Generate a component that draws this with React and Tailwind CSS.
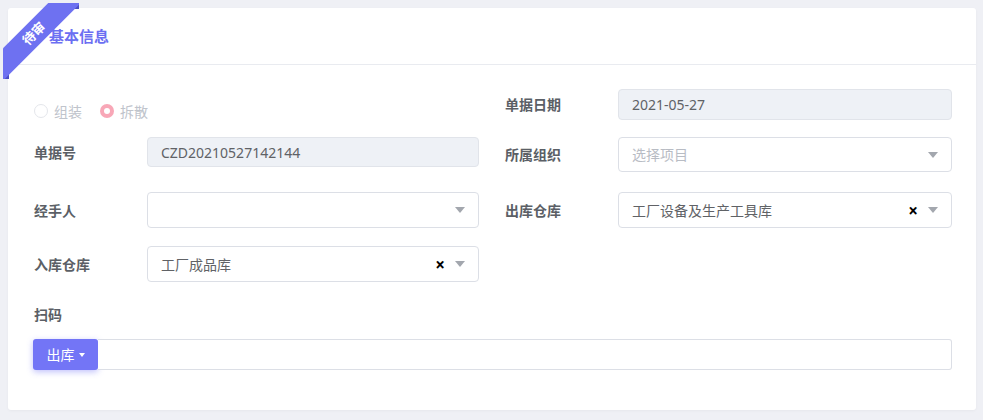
import React from "react";

const Caret = () => (
  <span className="ml-[10px] inline-block h-0 w-0 border-x-[5px] border-t-[6px] border-x-transparent border-t-[#a3a7ae]" />
);

const Select = ({ value, placeholder, clearable, h = "h-[36px]" }) => (
  <div className={`flex ${h} w-full items-center rounded-[4px] border border-[#dcdfe6] bg-white pl-[13px] pr-[13px]`}>
    <span className={`flex-1 truncate text-[14px] ${value ? "text-[#606266]" : "text-[#b8bcc4]"}`}>
      {value || placeholder}
    </span>
    {clearable && <span className="text-[17px] font-bold leading-none text-black">×</span>}
    <Caret />
  </div>
);

const Disabled = ({ value, h = "h-[31px]" }) => (
  <div className={`flex ${h} w-full items-center rounded-[4px] border border-[#e1e4ea] bg-[#eef1f6] px-[13px] text-[14px] text-[#606266]`}>
    {value}
  </div>
);

const Field = ({ label, children, className = "" }) => (
  <div className={`flex items-center ${className}`}>
    <div className="w-[113px] shrink-0 text-[14px] font-bold text-[#5b5f66]">{label}</div>
    <div className="flex-1">{children}</div>
  </div>
);

const Row = ({ className = "", children }) => (
  <div className={`grid grid-cols-[445px_1fr] items-start gap-x-[26px] ${className}`}>{children}</div>
);

export default function App() {
  return (
    <div className="min-h-screen bg-[#eff0f5] p-[8px] font-[family-name:'Noto_Sans','Noto_Sans_CJK_SC',sans-serif]">
      <div className="relative h-[402px] w-[968px] rounded-[3px] bg-white shadow-[0_1px_3px_rgba(0,0,0,0.04)]">
        {/* ribbon */}
        <div className="absolute left-[-5px] top-[-5px] z-10 h-[76px] w-[76px] overflow-hidden">
          <div className="absolute right-0 top-0 h-[6px] w-[7px] bg-[#4a4dc4]" />
          <div className="absolute bottom-0 left-0 h-[7px] w-[6px] bg-[#4a4dc4]" />
          <div className="absolute left-[-24px] top-[19px] flex h-[23px] w-[110px] -rotate-45 items-center justify-center bg-[#6e71f1] text-[13px] font-bold text-white">
            待审
          </div>
        </div>

        <div className="flex h-[57px] items-center border-b border-[#e9ebf0] pl-[41px] text-[15px] font-bold text-[#6c6ff2]">
          基本信息
        </div>

        <div className="pl-[26px] pr-[24px]">
          <Row className="mt-[24px]">
            <div className="flex h-[31px] items-center pt-[13px] text-[14px] text-[#c0c4cc]">
              <span className="h-[14px] w-[14px] rounded-full border border-[#e4e6eb] bg-white" />
              <span className="ml-[6px]">组装</span>
              <span className="ml-[18px] flex h-[14px] w-[14px] items-center justify-center rounded-full bg-[#f8a7b7]">
                <span className="h-[6px] w-[6px] rounded-full bg-white" />
              </span>
              <span className="ml-[6px]">拆散</span>
            </div>
            <Field label="单据日期">
              <Disabled value="2021-05-27" />
            </Field>
          </Row>

          <Row className="mt-[17px]">
            <Field label="单据号">
              <Disabled value="CZD20210527142144" h="h-[30px]" />
            </Field>
            <Field label="所属组织">
              <Select placeholder="选择项目" h="h-[35px]" />
            </Field>
          </Row>

          <Row className="mt-[20px]">
            <Field label="经手人">
              <Select />
            </Field>
            <Field label="出库仓库">
              <Select value="工厂设备及生产工具库" clearable />
            </Field>
          </Row>

          <Row className="mt-[18px]">
            <Field label="入库仓库">
              <Select value="工厂成品库" clearable />
            </Field>
            <div />
          </Row>

          <div className="mt-[23px] text-[14px] font-bold leading-[20px] text-[#5b5f66]">扫码</div>

          <div className="mt-[14px] flex h-[31px]">
            <button className="-ml-[1px] flex h-[31px] w-[65px] items-center justify-center rounded-[3px] bg-[#7375f6] text-[14px] text-white shadow-[0_2px_6px_rgba(115,117,246,0.45)]">
              出库
              <span className="ml-[4px] inline-block h-0 w-0 border-x-[3.5px] border-t-[4px] border-x-transparent border-t-white" />
            </button>
            <div className="h-[31px] flex-1 rounded-r-[3px] border border-l-0 border-[#dcdfe6] bg-white" />
          </div>
        </div>
      </div>
    </div>
  );
}
